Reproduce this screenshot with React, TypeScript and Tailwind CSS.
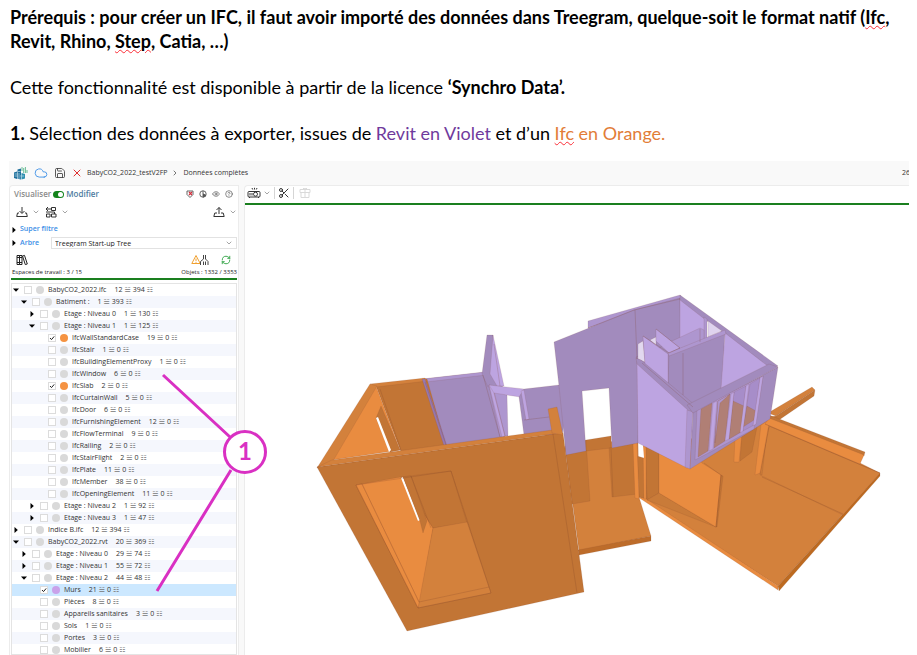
import { useState } from "react";
import clsx from "clsx";
import { ChevronDown, Cloud, Eye, CircleHelp, RefreshCw, Save, Scissors, X } from "lucide-react";

type TreeNode = {
  level: number;
  name: string;
  items: number;
  groups: number;
  open?: boolean;
  color?: string;
};

const ORANGE_DOT = "bg-[#f59342]";
const VIOLET_DOT = "bg-[#c9a2ea]";
const INDENT = ["pl-0", "pl-2", "pl-4", "pl-6"];

const NODES: TreeNode[] = [
  { level: 0, name: "BabyCO2_2022.ifc", items: 12, groups: 394, open: true },
  { level: 1, name: "Batiment :", items: 1, groups: 393, open: true },
  { level: 2, name: "Etage : Niveau 0", items: 1, groups: 130, open: false },
  { level: 2, name: "Etage : Niveau 1", items: 1, groups: 125, open: true },
  { level: 3, name: "IfcWallStandardCase", items: 19, groups: 0, color: ORANGE_DOT },
  { level: 3, name: "IfcStair", items: 1, groups: 0 },
  { level: 3, name: "IfcBuildingElementProxy", items: 1, groups: 0 },
  { level: 3, name: "IfcWindow", items: 6, groups: 0 },
  { level: 3, name: "IfcSlab", items: 2, groups: 0, color: ORANGE_DOT },
  { level: 3, name: "IfcCurtainWall", items: 5, groups: 0 },
  { level: 3, name: "IfcDoor", items: 6, groups: 0 },
  { level: 3, name: "IfcFurnishingElement", items: 12, groups: 0 },
  { level: 3, name: "IfcFlowTerminal", items: 9, groups: 0 },
  { level: 3, name: "IfcRailing", items: 2, groups: 0 },
  { level: 3, name: "IfcStairFlight", items: 2, groups: 0 },
  { level: 3, name: "IfcPlate", items: 11, groups: 0 },
  { level: 3, name: "IfcMember", items: 38, groups: 0 },
  { level: 3, name: "IfcOpeningElement", items: 11, groups: 0 },
  { level: 2, name: "Etage : Niveau 2", items: 1, groups: 92, open: false },
  { level: 2, name: "Etage : Niveau 3", items: 1, groups: 47, open: false },
  { level: 0, name: "Indice B.ifc", items: 12, groups: 394, open: false },
  { level: 0, name: "BabyCO2_2022.rvt", items: 20, groups: 369, open: true },
  { level: 1, name: "Etage : Niveau 0", items: 29, groups: 74, open: false },
  { level: 1, name: "Etage : Niveau 1", items: 55, groups: 72, open: false },
  { level: 1, name: "Etage : Niveau 2", items: 44, groups: 48, open: true },
  { level: 2, name: "Murs", items: 21, groups: 0, color: VIOLET_DOT },
  { level: 2, name: "Pièces", items: 8, groups: 0 },
  { level: 2, name: "Appareils sanitaires", items: 3, groups: 0 },
  { level: 2, name: "Sols", items: 1, groups: 0 },
  { level: 2, name: "Portes", items: 3, groups: 0 },
  { level: 2, name: "Mobilier", items: 6, groups: 0 }
];

// [fill, points], painted back to front
const DARK = "#c27535";
const MID = "#d3813c";
const LIGHT = "#e98c40";
const VDARK = "#a28bbd";
const VMID = "#ae96cf";
const VLIGHT = "#bda4e1";

const FACES: [string, string][] = [
  // diagonal beam on the right
  [MID, "768,414 812,388 815,391 776,417"],
  [DARK, "776,417 815,391 814,397 779,421 770,418"],
  // terrace slab
  [MID, "645,446 690,440 770,417 862,465 880,474 778,587 640,498"],
  [LIGHT, "638,498 645,499 778,587 778,591"],
  ["#bd6a20", "778,587 880,474 880,477 779,592"],
  [DARK, "645,446 659,453 659,494 647,501"],
  ["#c97b39", "647,501 659,494 716,528"],
  [LIGHT, "659,450 690,440 702,464 721,476 716,528 659,494"],
  [DARK, "721,476 723,477 717,528 716,528"],
  [DARK, "742,434 758,423 752,453 740,462"],
  [LIGHT, "735,437 742,433 739,463 734,463"],
  // right hand wall
  [MID, "769,427 861,466 880,474 843,516 760,476"],
  ["#cb7b38", "769,428 767,432 762,476 760,475"],
  [LIGHT, "761,426 770,420 768,430 760,474 755,476"],
  [DARK, "769,416 865,453 864,457 769,420"],
  [LIGHT, "769,419 864,456 860,465 765,425"],
  // small room behind the front wall
  [MID, "565,447 638,440 639,498 651,537 579,552"],
  [DARK, "565,447 586,441 590,502 572,505"],
  [DARK, "586,441 611,437 611,449 586,452"],
  [DARK, "609,449 634,443 638,495 612,498"],
  ["#bd6c2a", "651,537 651,542 579,556 578,551"],
  [DARK, "637,457 644,459 647,500 639,498"],
  [LIGHT, "633,445 637,443 639,500 635,499"],
  [LIGHT, "643,446 646,448 646,500 644,500"],
  ["#ffffff", "639,444 643,446 644,459 639,456"],
  // violet wall, left wing
  [VDARK, "424,380 487,373 505,438 446,447"],
  [VMID, "422,380 484,373 486,376 426,383"],
  [VDARK, "487,336 493,336 493,378 504,389 488,388 482,375"],
  [VLIGHT, "493,336 504,387 497,387 490,375"],
  [VMID, "489,386 496,391 507,396 508,437 500,438"],
  [VLIGHT, "489,386 493,388 505,437 502,438"],
  [VLIGHT, "489,386 524,390 520,398 494,394"],
  [VDARK, "524,390 559,386 567,410 562,436 524,436 519,398"],
  [VLIGHT, "521,392 524,391 529,420 526,421"],
  // violet gable
  [VMID, "588,322 680,296 682,299 588,329"],
  [VDARK, "554,343 634,311 680,299 682,380 638,362 638,444 612,449 609,389 582,392 586,452 566,456 559,387"],
  // violet rooms
  [VDARK, "636,358 680,340 722,385 694,409 640,366"],
  [VLIGHT, "680,299 705,318 705,341 680,351"],
  [VDARK, "680,296 778,367 770,371 680,301"],
  ["#dfd3ee", "708,322 722,332 708,338"],
  [VMID, "704,318 707,320 707,341 704,342"],
  [VMID, "670,343 700,329 704,331 704,342 680,350"],
  [VDARK, "669,354 725,333 722,391 694,408 668,385"],
  [VLIGHT, "725,334 769,368 721,390"],
  ["#e2d8ef", "638,345 643,342 645,363 638,360"],
  ["#e2d8ef", "650,341 656,338 656,346"],
  [VLIGHT, "656,330 680,349 669,354 656,342"],
  [VLIGHT, "643,337 668,355 668,385 645,366"],
  [VMID, "668,354 725,331 726,335 669,357"],
  [VLIGHT, "637,362 690,411 687,469 638,444"],
  [VDARK, "636,359 641,361 696,407 691,414 637,365"],
  [VMID, "687,411 693,413 690,470 685,468"],
  [VDARK, "693,413 778,368 770,420 690,470"],
  [VMID, "697,410 763,377 754,430 695,461"],
  [VDARK, "687,406 769,365 778,368 693,414"],
  ["#b07f75", "701,410 712,404 708,452 698,458"],
  ["#b07f75", "718,402 730,395 725,442 714,449"],
  ["#a78dc9", "734,393 746,387 741,433 729,440"],
  ["#a78dc9", "750,385 760,379 754,426 743,432"],
  [VMID, "718,402 730,395 720,404 715,444"],
  ["#b07f75", "733,402 744,407 741,433 729,440"],
  ["#b07f75", "747,407 756,412 754,421 743,428"],
  [VLIGHT, "713,404 717,402 713,450 709,452"],
  [VLIGHT, "731,395 734,393 729,440 725,442"],
  [VLIGHT, "746,387 749,385 743,432 740,434"],
  [VLIGHT, "760,379 763,377 756,425 753,427"],
  // orange room, inside
  [DARK, "376,387 427,380 446,447 401,453"],
  [MID, "370,385 425,379 427,382 376,388"],
  ["#9878ae", "422,380 425,380 447,447 444,447"],
  [LIGHT, "376,387 400,451 332,461"],
  [DARK, "381,407 400,451 390,453 376,419"],
  ["#ffffff", "376,419 378,418 391,451 389,453"],
  [MID, "370,385 377,387 333,462 317,469"],
  // orange room, front wall
  [DARK, "317,468 553,435 563,434 584,593 407,632"],
  [MID, "317,468 332,461 552,431 562,434 553,435"],
  [MID, "548,410 557,408 563,436 552,434"],
  [LIGHT, "356,486 401,478 433,529 419,609"],
  [DARK, "401,478 451,472 467,524 433,529"],
  [MID, "433,529 467,523 491,594 418,609"],
  [LIGHT, "356,486 362,485 419,603 418,609"],
  ["#ffffff", "401,479 403,478 420,521 418,522"],
  [DARK, "403,478 411,477 427,522 423,534 420,522"]
];

const EDGES = [
  "362,485 419,603 489,588",
  "411,477 431,529",
  "451,472 491,594 418,609 356,486 451,472",
  "553,435 577,594",
  "380,390 401,451",
  "425,383 446,446",
  "483,376 500,438",
  "494,345 500,387",
  "494,394 505,437",
  "524,421 549,418",
  "635,311 637,360",
  "683,354 683,396",
  "700,330 700,343",
  "704,464 721,476 716,528",
  "762,478 843,515",
  "765,425 861,466 880,474",
  "588,329 634,311 680,300",
  "611,449 613,498",
  "656,330 680,349 669,354 643,337",
  "642,364 693,408"
];

function Model() {
  return (
    <svg viewBox="245 206 664 449" className="block w-full" role="img" aria-label="Maquette 3D">
      {FACES.map(([fill, points], i) => (
        <polygon
          key={i}
          points={points}
          fill={fill}
          stroke={fill === "#ffffff" ? "none" : "#7a4030"}
          strokeOpacity={0.18}
          strokeWidth={0.7}
          strokeLinejoin="round"
        />
      ))}
      {EDGES.map((points) => (
        <polyline key={points} points={points} fill="none" stroke="#7a3f28" strokeOpacity={0.3} strokeWidth={0.7} />
      ))}
    </svg>
  );
}

function Logo() {
  return (
    <svg viewBox="0 0 15 15" className="size-[15px] shrink-0">
      <path d="M1 6.500l3-1v7.500l-3-1zM4.500 3.500l3.500-1v11l-3.500-.700z" fill="#1f6f9c" />
      <path d="M8.500 7l3.500 1v4.500l-3.500 1z" fill="#2f8fb0" />
      <path d="M1.500 8h5.500M1.500 10h9.500M5 5.500h2.500M5 12h2.500" stroke="#b7dcea" strokeWidth=".7" />
      <path d="M9 1v4M10.700 2v5M12.400 1v6M14 4v3" stroke="#58b58a" strokeWidth=".9" />
    </svg>
  );
}

function DownloadIcon() {
  return (
    <svg viewBox="0 0 12 12" className="size-3" fill="none" stroke="#333" strokeWidth="1">
      <path d="M6 1v6M3.500 5L6 7.500 8.500 5M3 7H1.500L.7 10.500h10.600L10.500 7H9" />
    </svg>
  );
}

function UploadIcon() {
  return (
    <svg viewBox="0 0 12 12" className="size-3" fill="none" stroke="#333" strokeWidth="1">
      <path d="M6 8V1.500M3.500 4L6 1.500 8.500 4M4 7H1.800L.8 10.500h10.400L10.200 7H8" />
    </svg>
  );
}

function SwapIcon() {
  return (
    <svg viewBox="0 0 12 12" className="size-3" fill="none" stroke="#333" strokeWidth="1">
      <path d="M1 3h5M3 1L1 3l2 2M6.500 1.500h4v3h-4zM1 6h8.500v2M1.500 8H5v3H1.500zM6.500 8H11v3H6.500z" />
    </svg>
  );
}

function ProjectorIcon() {
  return (
    <svg viewBox="0 0 14 12" className="h-3 w-[14px]" fill="none" stroke="#333" strokeWidth="1">
      <rect x="1" y="4.500" width="12" height="5.500" rx="1" />
      <circle cx="8.500" cy="7.200" r="2" />
      <path d="M3 6v2.500M5 6v2.500M5 1l.7 1.500M7.500.8v1.700M10 1l-.7 1.500M2.500 10v1M11.500 10v1" />
    </svg>
  );
}

function GiftIcon() {
  return (
    <svg viewBox="0 0 12 12" className="size-3" fill="none" stroke="#d9d9d9" strokeWidth="1">
      <path d="M1 2.500h10v3H1zM2 5.500h8v5H2zM6 2.500v8M3.500 2.500L5 1l1 1.500L7 1l1.500 1.500" />
    </svg>
  );
}

function BooksIcon() {
  return (
    <svg viewBox="0 0 12 12" className="size-3" fill="none" stroke="#222" strokeWidth="1">
      <path d="M1 1.500h2.500v9H1zM3.500 1.500H6v9H3.500zM6.500 2l2-.6 2.800 8.600-2 .6zM1 3.500h5M1 8.500h5" />
    </svg>
  );
}

function AlertTreeIcon() {
  return (
    <svg viewBox="0 0 18 12" className="h-3 w-[18px]" fill="none" strokeWidth="1">
      <path d="M5 1.500L.8 9.500h8.400zM5 4.500v2.500M5 7.800v1" stroke="#f0a030" />
      <path d="M9.500 11V7.500L12.500 5V1M14.500 1v4l2.500 2.500V11M12.500 11V7.500M14.500 11V7.500" stroke="#444" />
    </svg>
  );
}

function ShieldIcon() {
  return (
    <svg viewBox="0 0 8 8" className="size-2" fill="none" stroke="#555" strokeWidth=".9">
      <path d="M1 1h6v3.500L4 7.500 1 4.500z" />
      <path d="M3 2l3 3M6 2L3 5" stroke="#d22f3c" strokeWidth="1.200" />
    </svg>
  );
}

function ClockIcon() {
  return (
    <svg viewBox="0 0 8 8" className="size-2" fill="none" stroke="#555" strokeWidth=".9">
      <circle cx="4" cy="4" r="3.200" />
      <path d="M4 .8V4l3 1.500" />
      <path d="M4 4v3.200L7 5.500z" fill="#555" />
    </svg>
  );
}

function Arrow({ open }: { open: boolean }) {
  return (
    <svg viewBox="0 0 6 6" className="size-[6px]">
      <path d={open ? "M0 1.500h6L3 4.800z" : "M1.500 0v6L4.800 3z"} fill="#000" />
    </svg>
  );
}

const Chevron = () => <ChevronDown className="size-2 text-[#777]" strokeWidth={2} />;

function TreeRow({ node, index }: { node: TreeNode; index: number }) {
  const [checked, setChecked] = useState(Boolean(node.color));
  const selected = node.color === VIOLET_DOT;
  return (
    <li
      className={clsx(
        "flex h-3 items-center gap-1",
        INDENT[node.level],
        selected ? "bg-[#cce8ff]" : index % 2 === 1 ? "bg-[#f5f7fd]" : "bg-white"
      )}
    >
      <span className="flex w-2 justify-center">{node.open !== undefined && <Arrow open={node.open} />}</span>
      <label className="flex items-center gap-1 whitespace-nowrap">
        <span className="relative flex size-2 items-center justify-center">
          <input
            type="checkbox"
            checked={checked}
            onChange={(event) => setChecked(event.target.checked)}
            className="size-2 appearance-none border border-[#dcdcdc] bg-white"
          />
          {checked && (
            <svg viewBox="0 0 8 8" className="pointer-events-none absolute size-2">
              <path d="M2 4l1.500 1.600L6.200 2.400" fill="none" stroke="#222" strokeWidth="1" />
            </svg>
          )}
        </span>
        <span className={clsx("size-2 rounded-full", node.color ?? "bg-[#d9d9d9]")} />
        <span>{node.name}</span>
      </label>
      <span className="ml-1 flex items-center gap-[2px] whitespace-nowrap">
        {node.items}
        <span className="font-['DejaVu_Sans'] text-[7px] text-[#777]">☱</span>
        {node.groups}
        <span className="font-['DejaVu_Sans'] text-[7px] text-[#777]">☷</span>
      </span>
    </li>
  );
}

function SidePanel() {
  const [editing, setEditing] = useState(true);
  return (
    <aside className="flex w-[230px] shrink-0 flex-col rounded-tl border-x border-t border-[#ececec] bg-white px-px">
      <div className="flex h-4 shrink-0 items-center pr-1 pl-[3px]">
        <label className="flex items-center gap-[2px] text-[8px] font-semibold">
          <span className="text-[#8b8b8b]">Visualiser</span>
          <input
            type="checkbox"
            role="switch"
            checked={editing}
            onChange={(event) => setEditing(event.target.checked)}
            className="peer sr-only"
          />
          <span className="flex h-[7px] w-[11px] items-center justify-end rounded-full bg-[#14841c] p-px">
            <span className="size-[5px] rounded-full bg-white" />
          </span>
          <span className="text-[#4d7ba0]">Modifier</span>
        </label>
        <div className="ml-auto flex items-center gap-[5px] text-[#555]">
          <button aria-label="Protection"><ShieldIcon /></button>
          <button aria-label="Historique"><ClockIcon /></button>
          <button aria-label="Affichage"><Eye className="size-2" /></button>
          <button aria-label="Aide"><CircleHelp className="size-2" /></button>
        </div>
      </div>

      <div className="flex h-5 shrink-0 items-center gap-[5px] pl-[5px]">
        <button className="flex items-center gap-1" aria-label="Importer"><DownloadIcon /><Chevron /></button>
        <button className="flex items-center gap-1" aria-label="Convertir"><SwapIcon /><Chevron /></button>
        <button className="ml-auto flex items-center gap-1" aria-label="Exporter"><UploadIcon /><Chevron /></button>
      </div>

      <div className="flex h-[15px] shrink-0 items-center gap-[3px] text-[7px] font-semibold text-[#3a8ee6]">
        <Arrow open={false} />
        Super filtre
      </div>
      <div className="flex h-3 shrink-0 items-center gap-[3px] text-[7px]">
        <Arrow open={false} />
        <label htmlFor="tree" className="w-7 font-semibold text-[#3a8ee6]">Arbre</label>
        <div className="relative flex flex-1 items-center">
          <select id="tree" className="h-3 w-full appearance-none border border-[#e2e2e2] pl-[3px] leading-none text-[#222]">
            <option>Treegram Start-up Tree</option>
          </select>
          <span className="pointer-events-none absolute right-1"><Chevron /></span>
        </div>
      </div>

      <div className="mt-[3px] flex h-4 shrink-0 items-center pr-[6px] pl-[5px]">
        <button aria-label="Espaces de travail"><BooksIcon /></button>
        <button className="ml-auto" aria-label="Alertes"><AlertTreeIcon /></button>
        <button className="ml-3" aria-label="Actualiser"><RefreshCw className="size-[10px] text-[#1d9a33]" /></button>
      </div>
      <div className="flex h-2 shrink-0 items-center justify-between pl-px text-[6px] text-[#222]">
        <span>Espaces de travail : 3 / 15</span>
        <span>Objets : 1332 / 3353</span>
      </div>
      <div className="mt-[2px] h-[2px] shrink-0 bg-[#1a7f1f]" />

      <ul className="mt-[3px] min-h-0 flex-1 overflow-hidden border border-[#e4e4e4] text-[7px] text-[#333]">
        {NODES.map((node, i) => (
          <TreeRow key={i} node={node} index={i} />
        ))}
      </ul>
    </aside>
  );
}

function Callout() {
  return (
    <svg viewBox="0 0 118 230" className="pointer-events-none absolute top-[208px] left-[144px] w-[118px]">
      <g fill="none" stroke="#d930c3" strokeWidth="3">
        <path d="M10 6l67 62M4 222l74-121" />
        <circle cx="92" cy="83" r="20.500" fill="#fff" />
      </g>
      <text x="92" y="91" textAnchor="middle" className="font-['Lato'] text-[24px] font-bold" fill="#d930c3">
        1
      </text>
    </svg>
  );
}

export default function App() {
  return (
    <div className="flex h-screen flex-col overflow-hidden bg-white font-['Open_Sans',sans-serif]">
      <article className="flex flex-col gap-[22px] pt-[5px] pb-4 pl-[10px] font-['Lato',sans-serif] text-[18px] leading-6 text-black">
        <p className="font-bold">
          Prérequis : pour créer un IFC, il faut avoir importé des données dans Treegram, quelque-soit le format natif (
          <span className="underline decoration-red-500 decoration-wavy decoration-1">Ifc</span>, Revit, Rhino,{" "}
          <span className="underline decoration-red-500 decoration-wavy decoration-1">Step</span>, Catia, …)
        </p>
        <p>
          Cette fonctionnalité est disponible à partir de la licence <b>‘Synchro Data’.</b>
        </p>
        <p>
          <b>1.</b> Sélection des données à exporter, issues de <span className="text-[#6f3a9c]">Revit en Violet</span> et d’un{" "}
          <span className="text-[#e27d38]">
            <span className="underline decoration-red-500 decoration-wavy decoration-1">Ifc</span> en Orange.
          </span>
        </p>
      </article>

      <section className="relative mr-2 ml-[9px] flex min-h-0 flex-1 flex-col bg-[#f9f9f9]">
        <header className="flex h-6 shrink-0 items-center overflow-hidden pl-1 text-[7px] text-[#333]">
          <Logo />
          <Cloud className="ml-[6px] size-[14px] text-[#3a8ee6]" strokeWidth={1.5} />
          <Save className="ml-[6px] size-3 text-[#444]" strokeWidth={1.75} />
          <X className="ml-[5px] size-3 text-[#e02f2f]" />
          <nav className="ml-1 flex items-center gap-1">
            <a href="#projet">BabyCO2_2022_testV2FP</a>
            <ChevronDown className="size-2 -rotate-90" />
            <a href="#donnees">Données complètes</a>
          </nav>
          <span className="-mr-px ml-auto">26</span>
        </header>

        <div className="flex min-h-0 flex-1 gap-[5px]">
          <SidePanel />
          <main className="min-w-0 flex-1 overflow-hidden rounded-tl border-t border-l border-[#ececec] bg-white">
            <div className="flex h-[17px] items-center gap-[3px] pb-[3px] pl-[2px]">
              <button className="flex items-center gap-[2px]" aria-label="Vue"><ProjectorIcon /><Chevron /></button>
              <span className="h-3 w-px bg-[#d5d5d5]" />
              <button aria-label="Couper"><Scissors className="size-3 text-[#333]" /></button>
              <span className="h-3 w-px bg-[#d5d5d5]" />
              <button className="ml-[2px]" aria-label="Paquet" disabled><GiftIcon /></button>
            </div>
            <div className="h-[2px] bg-[#1a7f1f]" />
            <Model />
          </main>
        </div>
        <Callout />
      </section>
    </div>
  );
}
